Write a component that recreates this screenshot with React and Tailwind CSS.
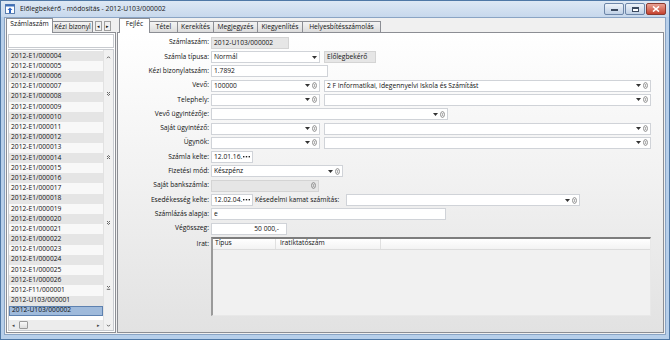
import React from "react";

const rows = [
  "2012-E1/000004", "2012-E1/000005", "2012-E1/000006", "2012-E1/000007", "2012-E1/000008",
  "2012-E1/000009", "2012-E1/000010", "2012-E1/000011", "2012-E1/000012", "2012-E1/000013",
  "2012-E1/000014", "2012-E1/000015", "2012-E1/000016", "2012-E1/000017", "2012-E1/000018",
  "2012-E1/000019", "2012-E1/000020", "2012-E1/000021", "2012-E1/000022", "2012-E1/000023",
  "2012-E1/000024", "2012-E1/000025", "2012-E1/000026", "2012-F11/000001", "2012-U103/000001",
  "2012-U103/000002",
];

function Arrow() {
  return (
    <svg width="5" height="3" viewBox="0 0 5 3" className="shrink-0">
      <path d="M0 0h5L2.5 3z" fill="#333" />
    </svg>
  );
}

function Lookup() {
  return (
    <svg width="5" height="7" viewBox="0 0 5 7" className="shrink-0">
      <ellipse cx="2.5" cy="3.5" rx="1.9" ry="2.9" fill="none" stroke="#8a8a8a" strokeWidth="1" />
      <path d="M2.5 2v3" stroke="#a0a0a0" strokeWidth="0.8" />
    </svg>
  );
}

function Dots() {
  return (
    <svg width="7" height="2" viewBox="0 0 7 2" className="shrink-0">
      <rect x="0" y="0" width="1.4" height="1.4" fill="#222" />
      <rect x="2.8" y="0" width="1.4" height="1.4" fill="#222" />
      <rect x="5.6" y="0" width="1.4" height="1.4" fill="#222" />
    </svg>
  );
}

function Box({ w, value, gray, combo, lookup, right, date }) {
  return (
    <div
      className={`flex h-[12px] shrink-0 items-center border px-[2px] ${
        gray ? "border-[#d4d4d4] bg-[#e6e6e6]" : "border-[#d0d3d8] bg-white"
      }`}
      style={{ width: w }}
    >
      <span className={`min-w-0 flex-1 overflow-hidden whitespace-nowrap leading-[10px] ${right ? "pr-[5px] text-right" : ""}`}>
        {value}
      </span>
      {date && <Dots />}
      {combo && <Arrow />}
      {lookup && (
        <span className="ml-[2px] flex">
          <Lookup />
        </span>
      )}
    </div>
  );
}

function Row({ label, children }) {
  return (
    <div className="flex h-[14.3px] items-center">
      <div className="w-[91px] shrink-0 text-right">{label}</div>
      <div className="ml-[2px] flex items-center gap-[4px]">{children}</div>
    </div>
  );
}

function Tab({ label, w, active }) {
  return active ? (
    <div
      className="relative z-10 -mb-px flex h-[15px] shrink-0 items-start justify-center whitespace-nowrap border border-b-0 border-[#8c8e94] bg-white pt-[2px]"
      style={{ width: w }}
    >
      {label}
    </div>
  ) : (
    <div
      className="-ml-px flex h-[11px] shrink-0 items-center justify-center overflow-hidden whitespace-nowrap border border-b-0 border-[#8c8e94] bg-gradient-to-b from-[#f4f4f4] to-[#dcdcdc] leading-[10px]"
      style={{ width: w }}
    >
      {label}
    </div>
  );
}

function ScrollGlyph({ d }) {
  return (
    <svg width="5" height="5" viewBox="0 0 5 5">
      <path d={d} fill="none" stroke="#555" strokeWidth="0.9" />
    </svg>
  );
}

export default function App() {
  return (
    <div className="flex h-[340px] w-[670px] flex-col overflow-hidden border border-[#4f78a6] bg-[#b7cfea] font-['Open_Sans','Noto_Sans',sans-serif] text-[6.7px] leading-none text-[#111]">
      {/* title bar */}
      <div className="flex h-[16px] shrink-0 items-center bg-gradient-to-b from-[#dde8f4] to-[#c7d8ec] pl-[4px] pr-[3px]">
        <svg width="10" height="10" viewBox="0 0 10 10">
          <rect x="0.5" y="0.5" width="9" height="9" fill="#fff" stroke="#5b7fb0" />
          <rect x="0.5" y="0.5" width="9" height="2" fill="#3d6fb8" />
          <path d="M5 3.5l2.5 2.5H6V9H4V6H2.5z" fill="#2b63c4" />
        </svg>
        <span className="ml-[5px] text-[6.8px] text-[#1a1a1a]">Előlegbekérő - módosítás - 2012-U103/000002</span>
        <div className="ml-auto flex gap-[1px] self-start pt-[2px]">
          <div className="flex h-[12px] w-[20px] items-end justify-center rounded-[2px] border border-[#6d86a8] bg-gradient-to-b from-[#eef3f9] to-[#c0d1e6] pb-[3px]">
            <div className="h-[2px] w-[7px] border border-[#3b4a60] bg-white" />
          </div>
          <div className="flex h-[12px] w-[20px] items-center justify-center rounded-[2px] border border-[#6d86a8] bg-gradient-to-b from-[#eef3f9] to-[#c0d1e6]">
            <div className="h-[5px] w-[7px] border border-t-2 border-[#3b4a60] bg-white" />
          </div>
          <div className="flex h-[12px] w-[20px] items-center justify-center rounded-[2px] border border-[#8b3b30] bg-gradient-to-b from-[#e9a294] to-[#c4402e]">
            <svg width="8" height="6" viewBox="0 0 8 6">
              <path d="M1 0.5l6 5M7 0.5l-6 5" stroke="#fff" strokeWidth="1.6" />
            </svg>
          </div>
        </div>
      </div>

      {/* client */}
      <div className="mx-[3px] mb-[4px] flex flex-1 gap-[1px] border border-[#8aa4c4] bg-[#f0f0f0] pb-[1px] pl-[1px] pr-[1px]">
        {/* left panel */}
        <div className="flex w-[110px] shrink-0 flex-col">
          <div className="flex h-[14px] shrink-0 items-end">
            <Tab label="Számlaszám" w={47} active />
            <Tab label="Kézi bizonyl" w={41} />
            <div className="ml-[2px] flex gap-[2px] self-end pb-[1px]">
              <div className="flex h-[10px] w-[7px] items-center justify-center border border-[#a0a0a0] bg-[#f0f0f0] text-[5px]">◂</div>
              <div className="flex h-[10px] w-[7px] items-center justify-center border border-[#a0a0a0] bg-[#f0f0f0] text-[5px]">▸</div>
            </div>
          </div>
          <div className="flex flex-1 flex-col border border-[#8c8e94] bg-white px-[1px] pt-[1px]">
            <div className="h-[14px] shrink-0 border border-[#c8cbd0] bg-white" />
            <div className="mt-[1px] flex flex-1 border border-[#c8cbd0] bg-white">
              <div className="flex flex-1 flex-col">
                <div className="flex-1 pt-[1px]">
                  {rows.map((r, i) => (
                    <div
                      key={r}
                      className={`flex h-[10.2px] items-center whitespace-nowrap pl-[2px] ${
                        i === rows.length - 1
                          ? "border border-[#5d81b0] bg-[#9fbadb]"
                          : i % 2 === 0
                          ? "bg-[#e5e5e5]"
                          : "bg-[#f8f8f8]"
                      }`}
                    >
                      {r}
                    </div>
                  ))}
                </div>
                <div className="flex h-[10px] shrink-0 items-center bg-[#ececec] px-[3px]">
                  <span className="text-[5px] text-[#444]">◂</span>
                  <div className="ml-[4px] h-[8px] w-[9px] rounded-[1px] border border-[#9a9a9a] bg-gradient-to-b from-[#f8f8f8] to-[#dedede]" />
                  <span className="ml-auto text-[5px] text-[#444]">▸</span>
                </div>
              </div>
              <div className="flex w-[10px] shrink-0 flex-col items-center border-l border-[#e2e2e2] bg-[#f1f1f1]">
                <div className="mt-[5px]"><ScrollGlyph d="M1 3.2l1.5-1.5L4 3.2" /></div>
                <div className="mt-[31px]"><ScrollGlyph d="M1 1l1.5 1.5L4 1M1 3l1.5 1.5L4 3" /></div>
                <div className="mt-[59px]"><ScrollGlyph d="M1 2l1.5-1.5L4 2M1 4l1.5-1.5L4 4" /></div>
                <div className="mt-[60px]"><ScrollGlyph d="M1 1l1.5 1.5L4 1M1 3l1.5 1.5L4 3" /></div>
                <div className="mt-[60px]"><ScrollGlyph d="M1 1l1.5 1.5L4 1M0.8 4.3h3.4" /></div>
                <div className="mb-[2px] mt-auto"><ScrollGlyph d="M1 1.8l1.5 1.5L4 1.8" /></div>
              </div>
            </div>
            <div className="h-[1px]" />
          </div>
        </div>

        {/* right panel */}
        <div className="flex flex-1 flex-col">
          <div className="flex h-[14px] shrink-0 items-end pl-[2px]">
            <Tab label="Fejléc" w={31} active />
            <Tab label="Tétel" w={29} />
            <Tab label="Kerekítés" w={37} />
            <Tab label="Megjegyzés" w={45} />
            <Tab label="Kiegyenlítés" w={46} />
            <Tab label="Helyesbítésszámolás" w={79} />
          </div>
          <div className="flex-1 border border-[#8c8e94] bg-gradient-to-b from-white via-[#f1f1f1] to-[#e2e2e2] pt-[2.6px]">
            <Row label="Számlaszám:">
              <Box w={78} value="2012-U103/000002" gray />
            </Row>
            <Row label="Számla típusa:">
              <Box w={109} value="Normál" combo />
              <Box w={52} value="Előlegbekérő" gray />
            </Row>
            <Row label="Kézi bizonylatszám:">
              <Box w={117} value="1.7892" />
            </Row>
            <Row label="Vevő:">
              <Box w={109} value="100000" combo lookup />
              <Box w={327} value="2 F Informatikai, Idegennyelvi Iskola és Számítást" combo lookup />
            </Row>
            <Row label="Telephely:">
              <Box w={109} combo lookup />
              <Box w={327} combo lookup />
            </Row>
            <Row label="Vevő ügyintézője:">
              <Box w={237} combo lookup />
            </Row>
            <Row label="Saját ügyintéző:">
              <Box w={109} combo lookup />
              <Box w={327} combo lookup />
            </Row>
            <Row label="Ügynök:">
              <Box w={109} combo lookup />
              <Box w={327} combo lookup />
            </Row>
            <Row label="Számla kelte:">
              <Box w={42} value="12.01.16." date />
            </Row>
            <Row label="Fizetési mód:">
              <Box w={132} value="Készpénz" combo lookup />
            </Row>
            <Row label="Saját bankszámla:">
              <Box w={108} gray lookup />
            </Row>
            <Row label="Esedékesség kelte:">
              <Box w={42} value="12.02.04." date />
              <span className="-ml-[2px] w-[87px] shrink-0 whitespace-nowrap">Késedelmi kamat számítás:</span>
              <Box w={234} combo lookup />
            </Row>
            <Row label="Számlázás alapja:">
              <Box w={235} value="e" />
            </Row>
            <Row label="Végösszeg:">
              <Box w={76} value="50 000,-" right />
            </Row>
            <div className="mt-[1px] flex">
              <div className="w-[91px] shrink-0 pt-[4px] text-right">Irat:</div>
              <div className="ml-[2px] h-[79px] w-[440px] border border-l-2 border-t-2 border-b-[#e8e8e8] border-l-[#9a9a9a] border-r-[#e8e8e8] border-t-[#7d7d7d] bg-[#f1f1f1]">
                <div className="flex h-[11px] items-center border-b border-[#dcdcdc] bg-gradient-to-b from-white to-[#f3f3f3]">
                  <div className="flex h-full w-[63px] items-center border-r border-[#e0e0e0] pl-[2px]">Típus</div>
                  <div className="flex h-full w-[105px] items-center border-r border-[#e0e0e0] pl-[4px]">Iratiktatószám</div>
                </div>
              </div>
            </div>
          </div>
        </div>
      </div>
    </div>
  );
}
